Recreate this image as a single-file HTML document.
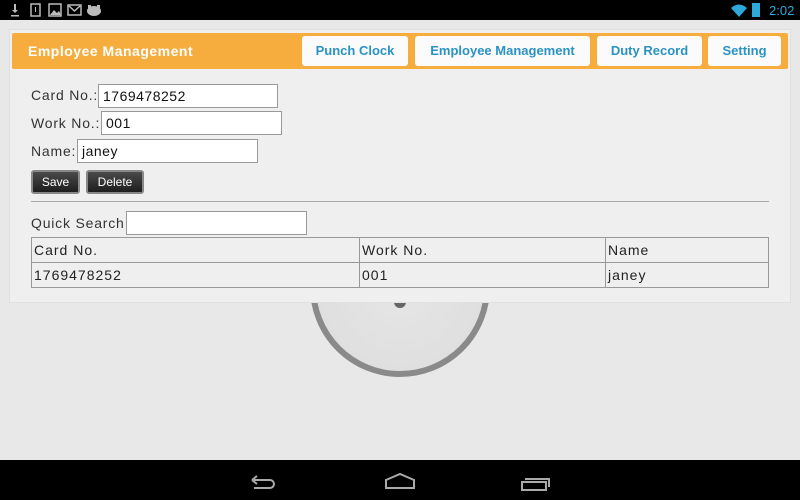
<!DOCTYPE html>
<html><head><style>
*{margin:0;padding:0;box-sizing:border-box}
html,body{width:800px;height:500px;overflow:hidden}
body{background:#e8e8e8;font-family:"Liberation Sans",sans-serif;position:relative}
.sb{position:absolute;left:0;top:0;width:800px;height:20px;background:#000}
.nb{position:absolute;left:0;top:460px;width:800px;height:40px;background:#000}
.circle{position:absolute;left:310px;top:197px;width:180px;height:180px;border-radius:50%;border:6px solid #8a8a8a;background:radial-gradient(#e6e6e6,#dcdcdc)}
.dot{position:absolute;left:394px;top:299px;width:12px;height:9px;border-radius:0 0 6px 6px;background:#666}
.panel{position:absolute;left:9px;top:29px;width:782px;height:274px;background:#efefef;border:1px solid #e0e0e0}
.hdr{position:absolute;left:12px;top:33px;width:776px;height:36px;background:#f6ad3d;border-radius:2px}
.title{position:absolute;left:28px;top:43px;color:#fff;font-weight:bold;font-size:14px;letter-spacing:.5px}
.tab{position:absolute;top:36px;height:30px;background:#fbfbfb;border-radius:3px;color:#2a93c4;font-weight:bold;font-size:13px;text-align:center;line-height:30px}
.lbl{position:absolute;font-size:14px;color:#333;letter-spacing:.8px}
.in{position:absolute;height:24px;background:#fff;border:1px solid #999;font-size:14px;padding-left:4px;line-height:22px;color:#111;letter-spacing:.5px}
.btn{position:absolute;top:170px;height:24px;background:linear-gradient(#4a4a4a,#1e1e1e);border:2px solid #888;border-radius:3px;color:#fff;font-size:12px;text-align:center;line-height:20px}
.hr{position:absolute;left:31px;top:201px;width:738px;height:1px;background:#aaa}
table{position:absolute;left:31px;top:237px;width:738px;border-collapse:collapse;font-size:14px;color:#222;letter-spacing:1px}
td{border:1px solid #999;height:25px;padding-left:2px}
</style></head><body>
<div class="sb">
<svg width="120" height="20" style="position:absolute;left:0;top:0" fill="#bbb">
<path d="M14 4h2v6h2l-3 3-3-3h2z"/><rect x="11" y="15" width="8" height="1.5"/>
<rect x="31" y="4" width="9" height="12" fill="none" stroke="#bbb" stroke-width="1.5"/><rect x="35" y="7" width="1" height="5"/>
<rect x="49" y="4" width="12" height="12" fill="none" stroke="#bbb" stroke-width="1.5"/><path d="M50 15l4-5 3 3 2-2 2 4z"/>
<rect x="68" y="5" width="13" height="10" fill="none" stroke="#bbb" stroke-width="1.5"/><path d="M69 6l5.5 5 5.5-5" fill="none" stroke="#bbb" stroke-width="1.5"/>
<ellipse cx="94" cy="11" rx="7" ry="5"/><rect x="88" y="5" width="3" height="4"/><rect x="97" y="5" width="3" height="4"/>
</svg>
<svg width="30" height="20" style="position:absolute;left:728px;top:0"><path d="M3 8q8-7 16 0l-8 9z" fill="#2ea8d8"/></svg>
<div style="position:absolute;left:752px;top:3px;width:8px;height:14px;background:#2ea8d8"></div>
<div style="position:absolute;left:769px;top:3px;color:#2ea8d8;font-size:13px">2:02</div>
</div>
<div class="circle"></div>
<div class="dot"></div>
<div class="panel"></div>
<div class="hdr"></div>
<div class="title">Employee Management</div>
<div class="tab" style="left:302px;width:106px">Punch Clock</div>
<div class="tab" style="left:415px;width:175px">Employee Management</div>
<div class="tab" style="left:597px;width:105px">Duty Record</div>
<div class="tab" style="left:708px;width:73px">Setting</div>
<div class="lbl" style="left:31px;top:87px">Card No.:</div>
<div class="in" style="left:98px;top:84px;width:180px">1769478252</div>
<div class="lbl" style="left:31px;top:115px">Work No.:</div>
<div class="in" style="left:101px;top:111px;width:181px">001</div>
<div class="lbl" style="left:31px;top:143px">Name:</div>
<div class="in" style="left:77px;top:139px;width:181px">janey</div>
<div class="btn" style="left:31px;width:49px">Save</div>
<div class="btn" style="left:86px;width:58px">Delete</div>
<div class="hr"></div>
<div class="lbl" style="left:31px;top:215px">Quick Search</div>
<div class="in" style="left:126px;top:211px;width:181px"></div>
<table><tr><td style="width:328px">Card No.</td><td style="width:246px">Work No.</td><td>Name</td></tr>
<tr><td>1769478252</td><td>001</td><td>janey</td></tr></table>
<div class="nb">
<svg width="800" height="40" fill="none" stroke="#aaa" stroke-width="2">
<path d="M254 20h16a4 4 0 0 1 0 8h-16M252 20l5-4M252 20l5 4"/>
<path d="M386 28v-8l14-6 14 6v8z"/>
<rect x="522" y="22" width="24" height="8"/><path d="M525 19h24v8"/>
</svg>
</div>
</body></html>
